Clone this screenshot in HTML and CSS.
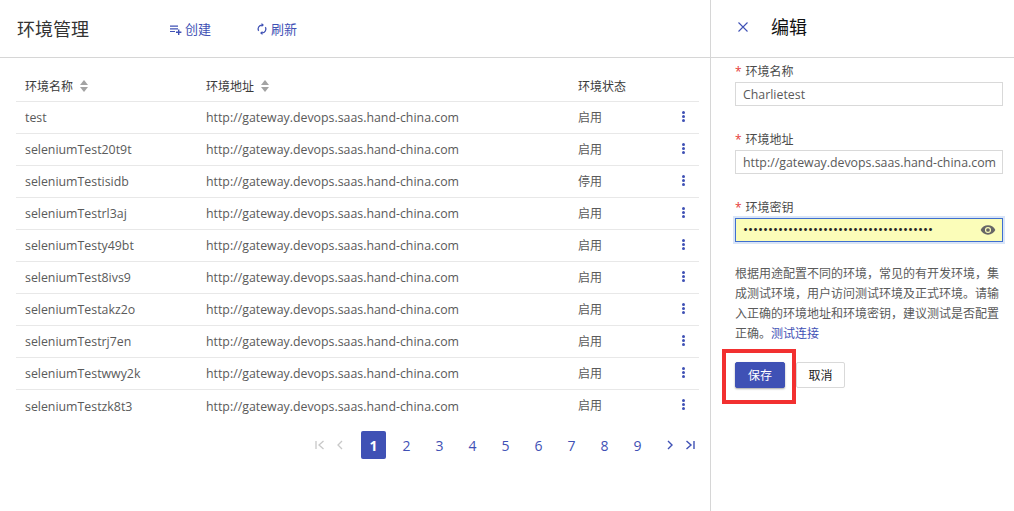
FILE: index.html
```html
<!DOCTYPE html>
<html lang="zh">
<head>
<meta charset="utf-8">
<title>环境管理</title>
<link rel="stylesheet" href="styles.css">
</head>
<body>
<div class="page">
  <main class="main">
    <header class="topbar">
      <h1 class="title">环境管理</h1>
      <a class="action action-create">
        <svg class="action-icon" viewBox="0 0 12 12"><path d="M0 2.500h8v1.200H0zM0 5.200h8v1.200H0zM0 7.900h5v1.200H0zM8 6.600h1.400v2h2V10h-2v2H8v-2H6V8.600h2z" fill="currentColor"/></svg>
        <span>创建</span>
      </a>
      <a class="action action-refresh">
        <svg class="action-icon" viewBox="0 0 12 12"><path d="M6 2.100a3.900 3.900 0 0 0-3.400 5.800M6 9.900a3.900 3.900 0 0 0 3.400-5.800" fill="none" stroke="currentColor" stroke-width="1.300"/><path d="M5.600 0v4L8 2zM6.400 12V8L4 10z" fill="currentColor"/></svg>
        <span>刷新</span>
      </a>
    </header>
    <section class="content">
      <div class="table">
        <div class="row head">
          <div class="c-name">环境名称<span class="sort"><i class="up"></i><i class="down"></i></span></div>
          <div class="c-url">环境地址<span class="sort"><i class="up"></i><i class="down"></i></span></div>
          <div class="c-state">环境状态</div>
          <div class="c-more"></div>
        </div>
        <div class="row"><div class="c-name">test</div><div class="c-url">http://gateway.devops.saas.hand-china.com</div><div class="c-state">启用</div><div class="c-more"><span class="dots"><i></i><i></i><i></i></span></div></div>
        <div class="row"><div class="c-name">seleniumTest20t9t</div><div class="c-url">http://gateway.devops.saas.hand-china.com</div><div class="c-state">启用</div><div class="c-more"><span class="dots"><i></i><i></i><i></i></span></div></div>
        <div class="row"><div class="c-name">seleniumTestisidb</div><div class="c-url">http://gateway.devops.saas.hand-china.com</div><div class="c-state">停用</div><div class="c-more"><span class="dots"><i></i><i></i><i></i></span></div></div>
        <div class="row"><div class="c-name">seleniumTestrl3aj</div><div class="c-url">http://gateway.devops.saas.hand-china.com</div><div class="c-state">启用</div><div class="c-more"><span class="dots"><i></i><i></i><i></i></span></div></div>
        <div class="row"><div class="c-name">seleniumTesty49bt</div><div class="c-url">http://gateway.devops.saas.hand-china.com</div><div class="c-state">启用</div><div class="c-more"><span class="dots"><i></i><i></i><i></i></span></div></div>
        <div class="row"><div class="c-name">seleniumTest8ivs9</div><div class="c-url">http://gateway.devops.saas.hand-china.com</div><div class="c-state">启用</div><div class="c-more"><span class="dots"><i></i><i></i><i></i></span></div></div>
        <div class="row"><div class="c-name">seleniumTestakz2o</div><div class="c-url">http://gateway.devops.saas.hand-china.com</div><div class="c-state">启用</div><div class="c-more"><span class="dots"><i></i><i></i><i></i></span></div></div>
        <div class="row"><div class="c-name">seleniumTestrj7en</div><div class="c-url">http://gateway.devops.saas.hand-china.com</div><div class="c-state">启用</div><div class="c-more"><span class="dots"><i></i><i></i><i></i></span></div></div>
        <div class="row"><div class="c-name">seleniumTestwwy2k</div><div class="c-url">http://gateway.devops.saas.hand-china.com</div><div class="c-state">启用</div><div class="c-more"><span class="dots"><i></i><i></i><i></i></span></div></div>
        <div class="row last"><div class="c-name">seleniumTestzk8t3</div><div class="c-url">http://gateway.devops.saas.hand-china.com</div><div class="c-state">启用</div><div class="c-more"><span class="dots"><i></i><i></i><i></i></span></div></div>
      </div>
      <nav class="pager">
        <span class="nav-btn off first"><svg viewBox="0 0 12 12"><path d="M2 2v8M9.500 2L5 6l4.500 4" fill="none" stroke="currentColor" stroke-width="1.300"/></svg></span>
        <span class="nav-btn off prev"><svg viewBox="0 0 12 12"><path d="M8 2L4 6l4 4" fill="none" stroke="currentColor" stroke-width="1.300"/></svg></span>
        <span class="pg current">1</span>
        <span class="pg">2</span><span class="pg">3</span><span class="pg">4</span><span class="pg">5</span><span class="pg">6</span><span class="pg">7</span><span class="pg">8</span><span class="pg">9</span>
        <span class="nav-btn next"><svg viewBox="0 0 12 12"><path d="M4 2l4 4-4 4" fill="none" stroke="currentColor" stroke-width="1.400"/></svg></span>
        <span class="nav-btn last-btn"><svg viewBox="0 0 12 12"><path d="M2.500 2L7 6l-4.500 4M10 2v8" fill="none" stroke="currentColor" stroke-width="1.400"/></svg></span>
      </nav>
    </section>
  </main>
  <aside class="drawer">
    <header class="drawer-head">
      <svg class="close" viewBox="0 0 10 10"><path d="M0.500 0.500l9 9M9.500 0.500l-9 9" stroke="currentColor" stroke-width="1.100" fill="none"/></svg>
      <h2 class="drawer-title">编辑</h2>
    </header>
    <form class="form">
      <div class="field">
        <label class="label"><span class="req">*</span>环境名称</label>
        <div class="input">Charlietest</div>
      </div>
      <div class="field">
        <label class="label"><span class="req">*</span>环境地址</label>
        <div class="input">http://gateway.devops.saas.hand-china.com</div>
      </div>
      <div class="field">
        <label class="label"><span class="req">*</span>环境密钥</label>
        <div class="input focused">
          <span class="secret">••••••••••••••••••••••••••••••••••••••</span>
          <svg class="eye" viewBox="0 0 24 24"><path d="M12 5C7 5 2.700 8 1 12c1.700 4 6 7 11 7s9.300-3 11-7c-1.700-4-6-7-11-7zm0 11.600a4.600 4.600 0 1 1 0-9.200 4.600 4.600 0 0 1 0 9.200zM12 9.200a2.800 2.800 0 1 0 0 5.600 2.800 2.800 0 0 0 0-5.600z" fill="currentColor"/></svg>
        </div>
      </div>
      <p class="desc">根据用途配置不同的环境，常见的有开发环境，集成测试环境，用户访问测试环境及正式环境。请输入正确的环境地址和环境密钥，建议测试是否配置正确。<a class="link">测试连接</a></p>
      <div class="buttons">
        <span class="mark"></span>
        <button type="button" class="btn primary">保存</button>
        <button type="button" class="btn">取消</button>
      </div>
    </form>
  </aside>
</div>
</body>
</html>
```
FILE: styles.css
```css
* { box-sizing: border-box; }
html, body { margin: 0; padding: 0; height: 511px; overflow: hidden; background: #fff; }
body { font-family: "Open Sans", "Noto Sans CJK SC", sans-serif; font-size: 12px; color: #5a5a5a; }
.page { display: flex; width: 1014px; height: 511px; }

.main { width: 710px; flex: none; }
.topbar { display: flex; align-items: center; height: 58px; border-bottom: 1px solid #d6d6d6; padding-left: 17px; }
.title { margin: 0; width: 153px; font-size: 18px; font-weight: 400; color: #333; line-height: 58px; }
.action { display: flex; align-items: center; gap: 3px; color: #3f51b5; font-size: 13px; }
.action-create { width: 86px; }
.action-icon { width: 12px; height: 12px; }

.content { padding: 12px 11px 0 16px; }
.row { display: flex; align-items: center; height: 32px; border-bottom: 1px solid #e8e8e8; padding: 0 0 2px 9px; font-size: 12.35px; }
.row.last { border-bottom: 0; }
.row .c-name, .row .c-url { padding-top: 2px; }
.row.head { color: #3a3a3a; font-size: 12px; padding-bottom: 0; }
.row.head .c-name, .row.head .c-url { padding-top: 0; }
.c-name { width: 181px; display: flex; align-items: center; }
.c-url { width: 372px; display: flex; align-items: center; }
.c-state { width: 93px; font-size: 12px; }
.c-more { width: 25px; display: flex; justify-content: center; }
.sort { display: inline-flex; flex-direction: column; gap: 2px; margin-left: 7px; }
.sort i { display: block; width: 0; height: 0; border-left: 4px solid transparent; border-right: 4px solid transparent; }
.sort .up { border-bottom: 5px solid #a3a3a3; }
.sort .down { border-top: 5px solid #a3a3a3; }
.dots { display: flex; flex-direction: column; gap: 1px; margin-top: -1px; }
.dots i { display: block; width: 3px; height: 3px; border-radius: 50%; background: #3f51b5; }

.pager { display: flex; align-items: center; margin-top: 9px; height: 28px; padding-left: 298px; color: #3f51b5; font-size: 14px; }
.pg { width: 25px; height: 28px; margin-right: 8px; display: flex; align-items: center; justify-content: center; border-radius: 2px; }
.pg.current { background: #3f51b5; color: #fff; font-weight: 700; }
.nav-btn { display: flex; width: 12px; height: 12px; }
.nav-btn svg { width: 12px; height: 12px; }
.off { color: #c8c8c8; }
.first { margin-right: 8px; }
.prev { margin-right: 15px; }
.next { margin-left: 6px; margin-right: 8px; }

.drawer { width: 304px; min-width: 0; flex: none; border-left: 1px solid #d6d6d6; }
.drawer-head { display: flex; align-items: center; height: 58px; border-bottom: 1px solid #d6d6d6; padding: 0 0 3px 27px; color: #3f51b5; }
.close { width: 10px; height: 10px; }
.drawer-title { margin: 0 0 2px 23px; font-size: 18px; font-weight: 400; color: #111; }

.form { padding: 5px 11px 0 24px; }
.field { margin-bottom: 25px; }
.label { display: block; height: 19px; line-height: 17px; font-size: 12px; color: #4a4a4a; }
.req { color: #e53935; margin-right: 4px; font-size: 12px; }
.input { display: flex; align-items: center; justify-content: space-between; height: 24px; border: 1px solid #d9d9d9; padding: 0 7px; color: #5a5a5a; font-size: 12.35px; white-space: nowrap; overflow: hidden; }
.input.focused { background: #fbfdb9; border-color: #3f6fd0; box-shadow: 0 0 0 2px #d9e5f7; overflow: visible; padding-right: 6px; }
.secret { color: #222; font-size: 13.300px; line-height: 1; }
.eye { width: 16px; height: 16px; color: #666; }
.desc { margin: -3px 0 0; line-height: 20px; font-size: 12px; color: #5a5a5a; }
.link { color: #3f51b5; }
.buttons { position: relative; display: flex; gap: 11px; margin-top: 18px; }
.btn { width: 50px; height: 26px; padding: 0; border: 1px solid #d9d9d9; border-radius: 2px; background: #fff; font: inherit; font-size: 12px; color: #222; }
.btn:last-child { width: 49px; }
.btn.primary { background: #3f51b5; border-color: #3f51b5; color: #fff; box-shadow: 0 1px 2px rgba(0,0,0,.35); }
.mark { position: absolute; left: -13px; top: -13px; width: 74px; height: 55px; border: 4px solid #f23030; pointer-events: none; }
```
